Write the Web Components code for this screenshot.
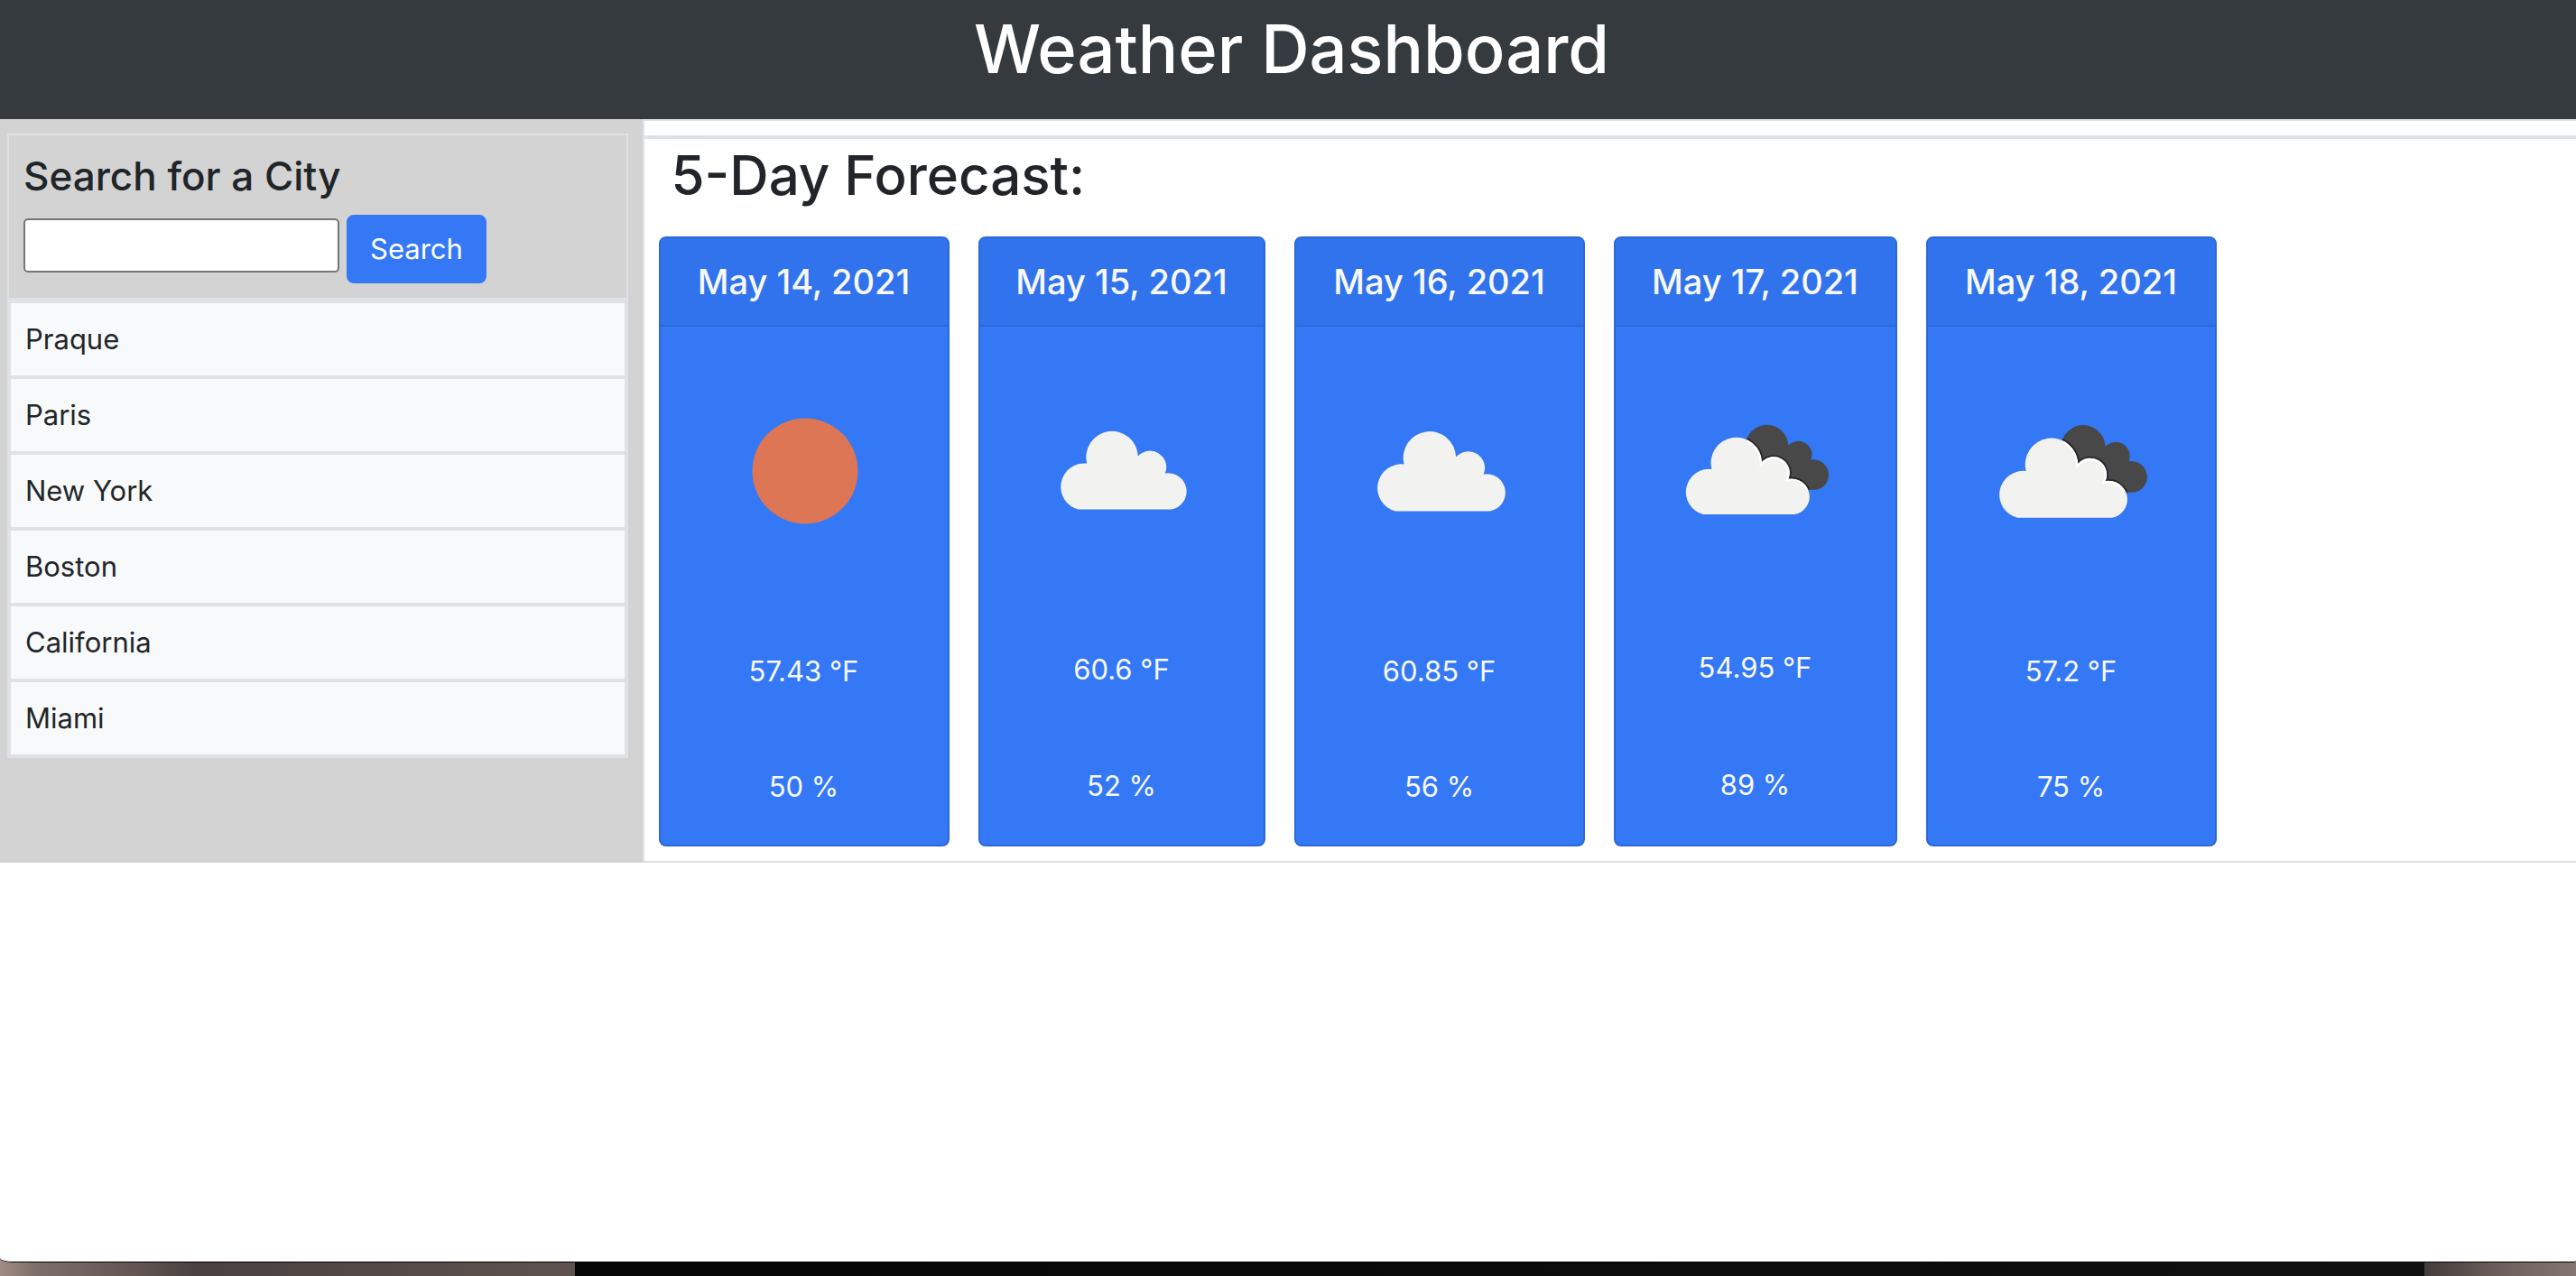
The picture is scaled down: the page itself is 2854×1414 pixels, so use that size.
<!DOCTYPE html>
<html lang="en">
<head>
<meta charset="utf-8">
<title>Weather Dashboard</title>
<style>
html, body { height: 100%; margin: 0; }
body { font-family: Inter, "Liberation Sans", sans-serif; font-size: 31px; line-height: 48px; color: #212529; }
</style>
</head>
<body>
<weather-app>
  <page-header slot="header">Weather Dashboard</page-header>
  <city-search slot="sidebar">
    <city-item>Praque</city-item>
    <city-item>Paris</city-item>
    <city-item>New York</city-item>
    <city-item>Boston</city-item>
    <city-item>California</city-item>
    <city-item>Miami</city-item>
  </city-search>
  <forecast-panel slot="main">
    <span slot="title">5-Day Forecast:</span>
    <forecast-card icon="sun"><span slot="date">May 14, 2021</span><span slot="temp">57.43 °F</span><span slot="humidity">50 %</span></forecast-card>
    <forecast-card icon="cloud"><span slot="date">May 15, 2021</span><span slot="temp">60.6 °F</span><span slot="humidity">52 %</span></forecast-card>
    <forecast-card icon="cloud"><span slot="date">May 16, 2021</span><span slot="temp">60.85 °F</span><span slot="humidity">56 %</span></forecast-card>
    <forecast-card icon="clouds"><span slot="date">May 17, 2021</span><span slot="temp">54.95 °F</span><span slot="humidity">89 %</span></forecast-card>
    <forecast-card icon="clouds"><span slot="date">May 18, 2021</span><span slot="temp">57.2 °F</span><span slot="humidity">75 %</span></forecast-card>
  </forecast-panel>
</weather-app>
<script>
function define(name, html, setup) {
  const template = document.createElement('template');
  template.innerHTML = '<style>*{box-sizing:border-box}:host{display:block;box-sizing:border-box}</style>' + html;
  customElements.define(name, class extends HTMLElement {
    constructor() {
      super();
      this.attachShadow({ mode: 'open' }).append(template.content.cloneNode(true));
    }
    connectedCallback() { if (setup) setup(this); }
  });
}

/* Weather icons, drawn on a 240-unit square */
const CLOUD = 'M20 87A26 26 0 0 1 29.500 36A28.700 28.700 0 1 1 86 28A18 18 0 0 1 116 47A20 20 0 0 1 123 87Z';
const FRONT = 'translate(39 84) scale(1.026)';
const BACK = 'translate(83.500 69.500) scale(.866)';
const ICONS = {
  sun: '<circle cx="121" cy="121" r="59" fill="#dc7655"/>',
  cloud: `<path transform="translate(50 76.500) scale(1.026)" fill="#f2f2f0" d="${CLOUD}"/>`,
  clouds: `
    <clipPath id="back"><path transform="${BACK}" d="${CLOUD}"/></clipPath>
    <clipPath id="front"><path transform="${FRONT}" d="${CLOUD}"/></clipPath>
    <path transform="${BACK}" fill="#484849" d="${CLOUD}"/>
    <path transform="${FRONT}" fill="#f2f2f0" d="${CLOUD}"/>
    <g clip-path="url(#back)">
      <path transform="${FRONT}" fill="none" stroke="#29292b" stroke-width="4" d="${CLOUD}"/>
      <g clip-path="url(#front)"><path transform="${FRONT}" fill="#f2f2f0" stroke="#fff" stroke-width="5" d="${CLOUD}"/></g>
    </g>`
};
define('weather-icon', `
<style>:host { width: 0; min-width: 100%; } svg { display: block; width: 100%; }</style>
<svg viewBox="0 0 240 240" aria-hidden="true"></svg>`,
el => { el.shadowRoot.querySelector('svg').innerHTML = ICONS[el.getAttribute('kind')]; });

/* Browser window above a strip of the desktop */
define('weather-app', `
<style>
:host { display: flex; flex-direction: column; min-height: 100%; background:
  linear-gradient(90deg, transparent 637px, #060606 637px, #101010 calc(100% - 168px), transparent calc(100% - 168px)),
  linear-gradient(90deg, #a08c85 0, #7d6d68 40px, #655855 140px, #4a4040 220px, #544946 420px, #5f5350 637px, #443b3a calc(100% - 168px), #6b5d59 calc(100% - 90px), #857570 100%); }
.window { flex: 1; background: #fff; border-bottom: 1px solid #000; border-radius: 0 0 4px 14px / 0 0 2px 5px; overflow: hidden; }
.desktop { height: 15px; }
.row { display: grid; grid-template-columns: calc(25% - 2px) 1fr; }
</style>
<div class="window"><slot name="header"></slot><main class="row"><slot name="sidebar"></slot><slot name="main"></slot></main></div>
<div class="desktop"></div>`);

define('page-header', `
<style>
:host { background: #353a3e; color: #fff; padding: 6px 0 30px 8px; text-align: center; }
h1 { margin: 0; font-size: 74px; line-height: 96px; font-weight: 500; }
</style>
<h1><slot></slot></h1>`);

define('city-search', `
<style>
:host { background: #d3d3d3; padding: 16px 16px 16px 8px; }
form { border: 2px solid #dee2e6; padding: 16px; }
label { display: block; font-size: 44px; line-height: 58px; font-weight: 500; margin-bottom: 14px; }
.controls { display: flex; gap: 8px; align-items: flex-start; }
input { width: 350px; height: 60px; margin: 4px 0 0; border: 2px solid #767676; border-radius: 5px; background: #fff; font: inherit; padding: 2px 4px; }
button { font: inherit; color: #fff; background: #3478f6; border: 2px solid #3478f6; border-radius: 8px; padding: 12px 24px; }
.cities { border: 2px solid #dee2e6; }
</style>
<form onsubmit="return false"><label for="city">Search for a City</label>
<div class="controls"><input id="city" type="text"><button type="submit">Search</button></div></form>
<div class="cities" role="list"><slot></slot></div>`);

define('city-item', `
<style>:host { background: #f8f9fa; border: 2px solid #dee2e6; padding: 16px; }</style>
<slot></slot>`, el => el.setAttribute('role', 'listitem'));

define('forecast-card', `
<style>
:host { display: flex; flex-direction: column; background: #3478f6; border: 2px solid #2c68d6; border-radius: 8px; color: #f8f9fa; text-align: center; }
header { padding: 24px 0; background: #3173ec; border-bottom: 2px solid #2c68d6; border-radius: 6px 6px 0 0; }
h5 { margin: 0; font-size: 38px; line-height: 48px; font-weight: 500; white-space: nowrap; }
.body { flex: 1; display: flex; flex-direction: column; justify-content: space-evenly; gap: 80px; padding: 40px; }
</style>
<header><h5><slot name="date"></slot></h5></header>
<div class="body"><div class="icon"></div><slot name="temp"></slot><slot name="humidity"></slot></div>`,
el => {
  const icon = document.createElement('weather-icon');
  icon.setAttribute('kind', el.getAttribute('icon'));
  el.shadowRoot.querySelector('.icon').replaceChildren(icon);
});

define('forecast-panel', `
<style>
:host { border: 2px solid #dee2e6; border-right: 0; padding-top: 16px; }
.forecast { border-top: 4px solid #dee2e6; padding: 2px 16px 16px; }
h2 { margin: 0 0 30px; padding-left: 14px; font-size: 60px; line-height: 76px; font-weight: 500; }
.cards { display: grid; grid-template-columns: 322px 318px 322px 314px 322px; gap: 32px; }
</style>
<section class="forecast"><h2><slot name="title"></slot></h2><div class="cards"><slot></slot></div></section>`);
</script>
</body>
</html>
